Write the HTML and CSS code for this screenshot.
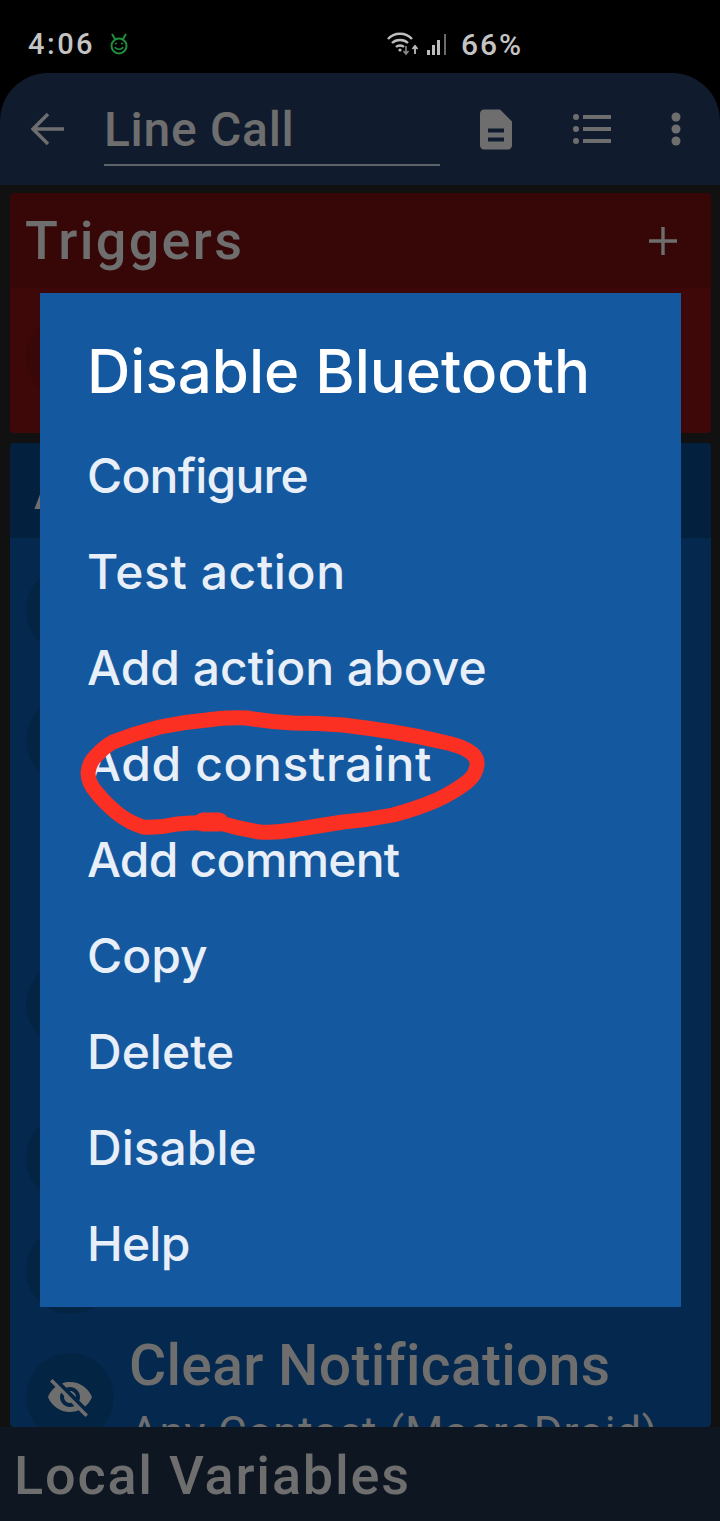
FILE: index.html
```html
<!DOCTYPE html>
<html lang="en">
<head>
    <meta charset="UTF-8">
    <meta name="viewport" content="width=device-width, initial-scale=1.0">
    <title>Line Call</title>
    <link rel="stylesheet" href="styles.css">
</head>
<body>
    <div class="screen">
        <!-- Status bar -->
        <div class="status-bar">
            <span class="clock">4:06</span>
            <svg class="status-droid" width="20" height="22" viewBox="0 0 20 22" fill="none" stroke="#1f8f3f" stroke-width="2">
                <circle cx="10" cy="13" r="7.5"/>
                <path d="M3 1l3 5M17 1l-3 5"/>
                <path d="M6 14c1 3 7 3 8 0" stroke-width="1.6"/>
                <circle cx="7" cy="10.5" r="1" fill="#1f8f3f" stroke="none"/>
                <circle cx="13" cy="10.5" r="1" fill="#1f8f3f" stroke="none"/>
            </svg>
            <svg class="status-wifi" width="32" height="24" viewBox="0 0 32 24" fill="none" stroke="#bdbdbd" stroke-width="2.4">
                <path d="M1 7c6-7 18-7 24 0"/>
                <path d="M5 11c4-4 12-4 16 0"/>
                <path d="M9 15c2-2 6-2 8 0"/>
                <circle cx="13" cy="18" r="1.6" fill="#bdbdbd" stroke="none"/>
                <path d="M19 14v8M16.5 19l2.5 3 2.5-3" stroke-width="1.6" stroke="#8a8a8a"/>
                <path d="M28 22v-8M25.5 17l2.5-3 2.5 3" stroke-width="1.8"/>
            </svg>
            <svg class="status-signal" width="20" height="23" viewBox="0 0 20 23" fill="#bdbdbd">
                <rect x="0" y="17" width="3" height="5"/>
                <rect x="5" y="12" width="3" height="10"/>
                <rect x="10" y="7" width="3" height="15"/>
                <rect x="17" y="1" width="2" height="21" fill="#6a6a6a"/>
            </svg>
            <span class="battery">66%</span>
        </div>

        <!-- Macro name bar -->
        <div class="app-bar">
            <svg class="back-icon" width="34" height="34" viewBox="0 0 34 34" fill="none" stroke="#6e6e6e" stroke-width="3.4">
                <path d="M33 17H3M17 2L2 17l15 15"/>
            </svg>
            <div class="macro-name">Line Call</div>
            <svg class="doc-icon" width="32" height="41" viewBox="4 2 16 20" fill="#6e6e6e" fill-rule="evenodd">
                <path d="M6 2h8l6 6v12c0 1.1-.9 2-2 2H6c-1.1 0-2-.9-2-2V4c0-1.1.9-2 2-2zM8 11.5v2h8v-2zM8 16v2h8v-2z"/>
            </svg>
            <svg class="list-icon" width="38" height="30" viewBox="0 0 38 30" fill="#6e6e6e">
                <circle cx="3" cy="3" r="3"/>
                <circle cx="3" cy="15" r="3"/>
                <circle cx="3" cy="27" r="3"/>
                <rect x="10" y="1" width="28" height="4"/>
                <rect x="10" y="13" width="28" height="4"/>
                <rect x="10" y="25" width="28" height="4"/>
            </svg>
            <svg class="more-icon" width="10" height="34" viewBox="0 0 10 34" fill="#6e6e6e">
                <circle cx="5" cy="5" r="4.5"/>
                <circle cx="5" cy="17" r="4.5"/>
                <circle cx="5" cy="29" r="4.5"/>
            </svg>
        </div>

        <!-- Macro content -->
        <div class="content">
            <div class="section triggers">
                <div class="section-head">
                    <span class="section-title">Triggers</span>
                    <svg width="30" height="30" viewBox="0 0 30 30" fill="none" stroke="#6e6e6e" stroke-width="3.4">
                        <path d="M15 1v28M1 15h28"/>
                    </svg>
                </div>
                <div class="section-body">
                    <div class="round-icon"></div>
                </div>
            </div>
            <div class="section actions">
                <div class="section-head">
                    <span class="section-title">Actions</span>
                </div>
                <div class="section-body">
                    <div class="action-row gap-first"><div class="round-icon"></div></div>
                    <div class="action-row gap-small"><div class="round-icon"></div></div>
                    <div class="action-row gap-large"><div class="round-icon"></div></div>
                    <div class="action-row gap-medium"><div class="round-icon"></div></div>
                    <div class="action-row gap-tiny"><div class="round-icon"></div></div>
                    <div class="action-row gap-last">
                        <div class="round-icon">
                            <svg width="48" height="48" viewBox="0 0 24 24" fill="#6e6e6e">
                                <path d="M12 7c2.76 0 5 2.24 5 5 0 .65-.13 1.26-.36 1.83l2.92 2.92c1.51-1.26 2.7-2.89 3.43-4.75-1.73-4.39-6-7.5-11-7.5-1.4 0-2.74.25-3.98.7l2.16 2.16C10.74 7.13 11.35 7 12 7zM2 4.27l2.28 2.28.46.46C3.08 8.3 1.78 10.02 1 12c1.73 4.39 6 7.5 11 7.5 1.55 0 3.03-.3 4.38-.84l.42.42L19.73 22 21 20.73 3.27 3 2 4.27zM7.53 9.8l1.55 1.55c-.05.21-.08.43-.08.65 0 1.66 1.34 3 3 3 .22 0 .44-.03.65-.08l1.55 1.55c-.67.33-1.41.53-2.2.53-2.76 0-5-2.24-5-5 0-.79.2-1.53.53-2.2zm4.31-.78l3.15 3.15.02-.16c0-1.66-1.34-3-3-3l-.17.01z"/>
                            </svg>
                        </div>
                        <div class="action-text">
                            <div class="action-name">Clear Notifications</div>
                            <div class="action-detail">Any Contact (MacroDroid)</div>
                        </div>
                    </div>
                </div>
            </div>
        </div>

        <div class="bottom-bar">Local Variables</div>

        <!-- Action options dialog -->
        <div class="dialog">
            <div class="dialog-title">Disable Bluetooth</div>
            <div class="dialog-item tight">Configure</div>
            <div class="dialog-item loose">Test action</div>
            <div class="dialog-item">Add action above</div>
            <div class="dialog-item loose">Add constraint</div>
            <div class="dialog-item tight">Add comment</div>
            <div class="dialog-item">Copy</div>
            <div class="dialog-item">Delete</div>
            <div class="dialog-item">Disable</div>
            <div class="dialog-item tight">Help</div>
        </div>

        <!-- Hand drawn circle round "Add constraint" -->
        <svg class="scribble" width="720" height="1521" viewBox="0 0 720 1521" fill="none" stroke="#fb3022" stroke-linecap="round" stroke-linejoin="round">
            <path stroke-width="15" d="M220 823 Q198 822 177 824 Q160 828 143 827 Q128 822 117 813 Q105 803 97 793 Q88 783 88 773 Q89 762 97 755 Q104 747 113 742 Q136 733 160 727 Q183 722 207 720 Q227 717 247 718 Q270 722 293 723 Q318 723 343 725 Q368 728 393 732 Q418 736 443 742 Q458 745 467 750 Q478 756 477 765 Q476 775 467 782 Q454 792 437 800 Q416 809 393 815 Q368 820 343 822 Q318 826 293 830 Q276 833 260 832 Q240 829 220 823"/>
            <path stroke-width="19" d="M203 822 L219 822"/>
        </svg>
    </div>
</body>
</html>
```

FILE: styles.css
```css
html, body {
    margin: 0;
    padding: 0;
    background-color: #000;
}

.screen {
    position: relative;
    width: 720px;
    height: 1521px;
    overflow: hidden;
    display: flex;
    flex-direction: column;
    font-family: Roboto, "Liberation Sans", sans-serif;
    color: #6e6e6e;
}

/* Status bar */
.status-bar {
    height: 73px;
    flex: none;
    display: flex;
    align-items: center;
    padding: 15px 0 0 28px;
    box-sizing: border-box;
    color: #c4c4c4;
}
.clock {
    font-size: 29px;
    font-weight: 500;
    letter-spacing: 2.5px;
    width: 81px;
}
.status-wifi {
    margin-left: 258px;
}
.status-signal {
    margin-left: 8px;
}
.battery {
    font-size: 30px;
    font-weight: 500;
    letter-spacing: 2px;
    margin-left: 14px;
}

/* Name bar */
.app-bar {
    height: 112px;
    flex: none;
    display: flex;
    align-items: center;
    background-color: #101c2e;
    border-radius: 48px 48px 0 0;
    position: relative;
}
.back-icon {
    margin-left: 31px;
}
.macro-name {
    width: 336px;
    height: 74px;
    box-sizing: border-box;
    margin-left: 39px;
    border-bottom: 2px solid #5d6168;
    font-size: 48px;
    font-weight: 500;
    letter-spacing: 0.7px;
    line-height: 76px;
}
.doc-icon {
    margin-left: 40px;
}
.list-icon {
    margin-left: 61px;
}
.more-icon {
    margin-left: 60px;
}

/* Sections */
.content {
    flex: 1;
    min-height: 0;
    background-color: #111;
    padding: 8px 9px 0 10px;
    display: flex;
    flex-direction: column;
    gap: 10px;
}
.section {
    border-radius: 4px;
    overflow: hidden;
}
.section-head {
    display: flex;
    align-items: center;
    justify-content: space-between;
    padding: 0 33px 0 15px;
    height: 95px;
}
.section-title {
    font-size: 54px;
    font-weight: 500;
    letter-spacing: 2.3px;
}
.triggers .section-head {
    background-color: #370707;
}
.triggers .section-body {
    background-color: #3e0808;
    height: 145px;
    padding-top: 25px;
    box-sizing: border-box;
}
.actions {
    flex: 1;
    min-height: 0;
    display: flex;
    flex-direction: column;
}
.actions .section-head {
    background-color: #03213f;
    padding-left: 24px;
}
.actions .section-body {
    background-color: #05294e;
    flex: 1;
    min-height: 0;
    overflow: hidden;
}
.round-icon {
    width: 88px;
    height: 88px;
    margin-left: 16px;
    flex: none;
    border-radius: 50%;
    display: flex;
    align-items: center;
    justify-content: center;
    background-color: #042443;
}
.triggers .round-icon {
    background-color: #390707;
}
.action-row {
    display: flex;
}
.gap-first {
    margin-top: 28px;
}
.gap-small {
    margin-top: 42px;
}
.gap-large {
    margin-top: 177px;
}
.gap-medium {
    margin-top: 65px;
}
.gap-tiny {
    margin-top: 24px;
}
.gap-last {
    margin-top: 39px;
}
.action-text {
    margin-left: 15px;
    margin-top: -20px;
}
.action-name {
    font-size: 57px;
    font-weight: 500;
    letter-spacing: 0.3px;
    line-height: 66px;
    white-space: nowrap;
}
.action-detail {
    font-size: 44px;
    letter-spacing: 0.8px;
    line-height: 60px;
    margin-left: 1px;
    padding-top: 4px;
    white-space: nowrap;
}

/* Bottom bar */
.bottom-bar {
    height: 94px;
    flex: none;
    box-sizing: border-box;
    padding-left: 14px;
    background-color: #0e1622;
    font-size: 54px;
    font-weight: 500;
    letter-spacing: 1.8px;
    line-height: 98px;
    position: relative;
}

/* Dialog */
.dialog {
    position: absolute;
    left: 40px;
    top: 293px;
    width: 641px;
    height: 1014px;
    box-sizing: border-box;
    padding: 40px 47px 0;
    background-color: #14589f;
    color: #e8eff8;
    font-family: Inter, "Liberation Sans", sans-serif;
}
.dialog-title {
    font-size: 60px;
    font-weight: 500;
    line-height: 76px;
    color: #fff;
    white-space: nowrap;
    margin-bottom: 19px;
}
.dialog-item {
    font-size: 48px;
    font-weight: 500;
    line-height: 96px;
    white-space: nowrap;
}
.tight {
    letter-spacing: -0.8px;
}
.loose {
    letter-spacing: 0.6px;
}
.scribble {
    position: absolute;
    left: 0;
    top: 0;
}
```
